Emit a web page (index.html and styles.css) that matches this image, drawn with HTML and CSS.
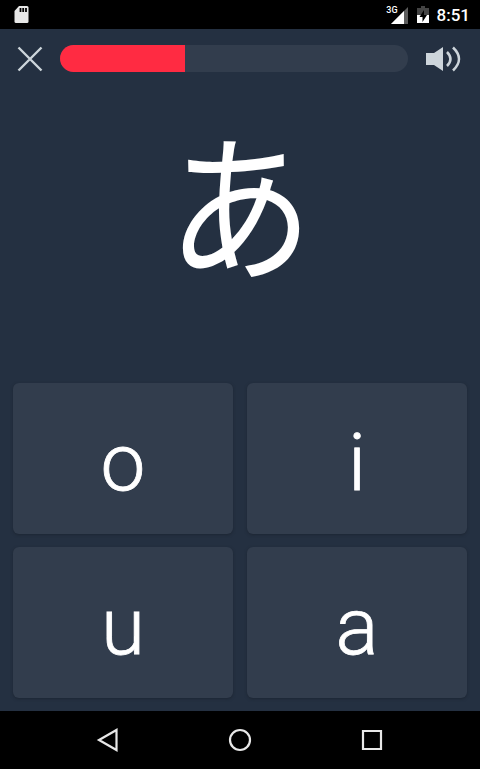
FILE: index.html
```html
<!DOCTYPE html>
<html lang="en"><head><meta charset="utf-8"><title>Kana quiz</title><link rel="stylesheet" href="styles.css"></head>
<body>
<header class="status"><svg class="sd" viewBox="0 0 16 18"><path fill="#e8e8e8" d="M5 0h8a1.500 1.500 0 0 1 1.500 1.500v14A1.500 1.500 0 0 1 13 17H2A1.500 1.500 0 0 1 .5 15.500V5z"/><path stroke="#000" stroke-width="1.800" d="M6.500 2v4M9.200 2v4M12 2v4"/></svg>
<span class="net">3G</span><svg class="signal" viewBox="0 0 18 18"><path fill="#5c5c5c" d="M18 1v17H1z"/><path fill="#fff" d="M14 5v13H1z"/></svg>
<svg class="battery" viewBox="0 0 12 18"><path fill="#444" d="M4 0h4v2h4v15H0V2h4z"/><path fill="#fff" d="M0 9h12v8H0z"/><path fill="#000" d="M7 4L2.500 11H5.500v5L10 9H7z"/></svg>
<time class="clock">8:51</time></header>
<main class="quiz">
<div class="toolbar"><svg class="close" viewBox="0 0 26 26"><path d="M1.500 1.500l23 23M24.500 1.500l-23 23" stroke="#cdd5db" stroke-width="2.400"/></svg><div class="progress"><div class="fill"></div></div>
<svg class="sound" viewBox="0 0 36 28"><path fill="#cdd5db" d="M0 8h8l9-6v24l-9-6H0z"/><path fill="none" stroke="#cdd5db" stroke-width="2.500" d="M21 7q7 7 0 14M27 2.500q12 11.500 0 23"/></svg></div>
<div class="prompt"><span class="kana" lang="ja">あ</span></div>
<div class="answers"><button>o</button><button>i</button><button>u</button><button>a</button></div>
</main>
<nav class="nav"><svg viewBox="0 0 24 24"><path d="M20.500 2v20L3 12z"/></svg><svg viewBox="0 0 24 24"><circle cx="12" cy="12" r="10"/></svg><svg viewBox="0 0 24 24"><path d="M3 3h18v18H3z"/></svg></nav>
</body></html>
```
FILE: styles.css
```css
*{box-sizing:border-box}
body{margin:0;width:480px;height:769px;overflow:hidden;display:flex;flex-direction:column;background:#243041;color:#fff;font-family:Roboto,sans-serif}
.status{height:29px;background:#000;display:flex;align-items:center;padding:0 10px 0 14px}
.sd{width:16px;height:18px;margin-right:auto}
.net{font-size:9px;font-weight:500;align-self:flex-start;margin-top:5px;margin-right:-8px;z-index:1}
.signal{width:18px;height:18px;margin-right:9px}
.battery{width:12px;height:18px;margin-right:8px}
.clock{font-size:17px;font-weight:500}
.quiz{height:682px;display:flex;flex-direction:column}
.toolbar{height:60px;display:flex;align-items:center;padding:0 18px 0 17px}
.close{width:26px;height:26px}
.progress{width:348px;height:27px;margin:0 18px 1px 17px;border-radius:14px;background:#323d4d;overflow:hidden}
.fill{width:36%;height:100%;background:#ff2b42}
.sound{width:36px;height:28px}
.prompt{flex:1;display:flex;justify-content:center;padding-top:38px}
.kana{font-family:"Noto Sans CJK JP",sans-serif;font-weight:400;font-size:146px;line-height:160px;height:160px;transform:translateY(-7px) scaleY(1.1)}
.answers{display:grid;grid-template-columns:220px 220px;grid-template-rows:151px 151px;gap:13px 14px;padding:0 13px 13px}
button{border:0;border-radius:6px;background:#323d4d;color:#fff;font:300 80px/1 Roboto,sans-serif;padding:9px 0 0;box-shadow:0 1px 3px #1d2633;-webkit-text-stroke:.8px #fff}
.nav{flex:1;background:#000;display:flex;justify-content:center;align-items:center;gap:108px}
.nav svg{width:24px;height:24px;fill:none;stroke:#e8e8e8;stroke-width:2.200}
```
